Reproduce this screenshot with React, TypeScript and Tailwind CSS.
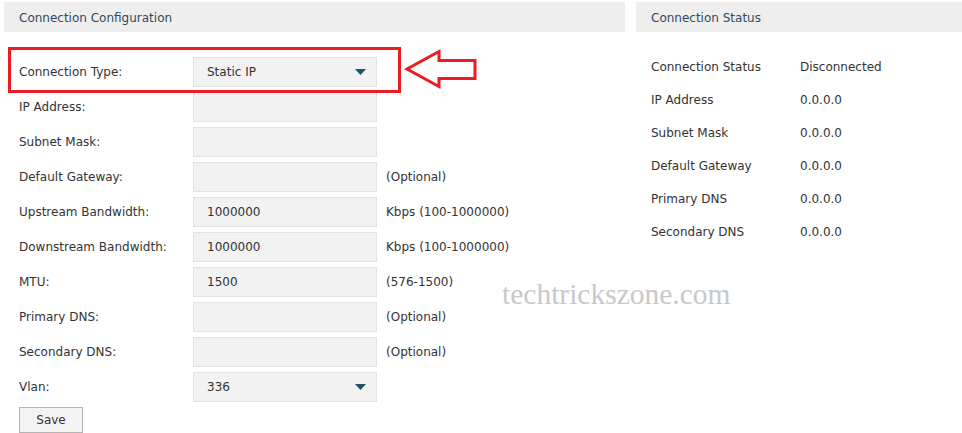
import React from "react";

type Row = { label: string; value?: string; hint?: string; select?: boolean };

const configRows: Row[] = [
  { label: "Connection Type:", value: "Static IP", select: true },
  { label: "IP Address:" },
  { label: "Subnet Mask:" },
  { label: "Default Gateway:", hint: "(Optional)" },
  { label: "Upstream Bandwidth:", value: "1000000", hint: "Kbps (100-1000000)" },
  { label: "Downstream Bandwidth:", value: "1000000", hint: "Kbps (100-1000000)" },
  { label: "MTU:", value: "1500", hint: "(576-1500)" },
  { label: "Primary DNS:", hint: "(Optional)" },
  { label: "Secondary DNS:", hint: "(Optional)" },
  { label: "Vlan:", value: "336", select: true },
];

const statusRows = [
  ["Connection Status", "Disconnected"],
  ["IP Address", "0.0.0.0"],
  ["Subnet Mask", "0.0.0.0"],
  ["Default Gateway", "0.0.0.0"],
  ["Primary DNS", "0.0.0.0"],
  ["Secondary DNS", "0.0.0.0"],
];

function Caret() {
  return (
    <svg width="11" height="6" viewBox="0 0 11 6" className="ml-auto">
      <path d="M0 0h11L5.5 6z" fill="#1f5563" />
    </svg>
  );
}

function Field({ row }: { row: Row }) {
  return (
    <div className="flex h-[35px] items-center">
      <div className="w-[174px] shrink-0">{row.label}</div>
      <div className="flex h-[30px] w-[184px] shrink-0 items-center border border-[#e3e3e3] bg-[#f2f2f2] pl-[13px] pr-[10px]">
        <span>{row.value}</span>
        {row.select && <Caret />}
      </div>
      {row.hint && <div className="ml-[9px]">{row.hint}</div>}
    </div>
  );
}

export default function App() {
  return (
    <div
      className="relative h-[433px] w-[962px] overflow-hidden bg-white text-[12px] text-[#333]"
      style={{ fontFamily: '"DejaVu Sans", Verdana, sans-serif' }}
    >
      <div className="flex gap-[11px] pl-[4px] pt-[2px]">
        {/* configuration form */}
        <div className="w-[621px]">
          <div className="flex h-[30px] items-center bg-[#eeeeee] pl-[15px] pt-[1px] text-[#34495e]">
            Connection Configuration
          </div>
          <div className="pl-[15px] pt-[22px]">
            {configRows.map((r) => (
              <Field key={r.label} row={r} />
            ))}
            <button className="mt-[3px] h-[26px] w-[64px] border border-[#b5b5b5] bg-[#f3f3f3] text-[#333]">
              Save
            </button>
          </div>
        </div>

        {/* status panel */}
        <div className="flex-1">
          <div className="flex h-[30px] items-center bg-[#eeeeee] pl-[15px] pt-[1px] text-[#34495e]">
            Connection Status
          </div>
          <div className="pl-[15px] pt-[18px]">
            {statusRows.map(([k, v]) => (
              <div key={k} className="flex h-[33px] items-center">
                <div className="w-[149px]">{k}</div>
                <div>{v}</div>
              </div>
            ))}
          </div>
        </div>
      </div>

      {/* highlight box and arrow */}
      <div className="absolute left-[8px] top-[47px] h-[46px] w-[393px] border-[3px] border-[#ed1c24]" />
      <svg className="absolute left-[400px] top-[45px]" width="85" height="48" viewBox="0 0 85 48">
        <path
          d="M7 24 L39 6.5 L39 15.5 L75 15.5 L75 33.5 L39 33.5 L39 41.5 Z"
          fill="none"
          stroke="#ed1c24"
          strokeWidth="3"
          strokeLinejoin="miter"
        />
      </svg>

      <div
        className="absolute left-[502px] top-[277px] text-[29.5px] leading-[34px] text-[#c8c8cc]"
        style={{ fontFamily: '"Liberation Serif", "Times New Roman", serif' }}
      >
        techtrickszone.com
      </div>
    </div>
  );
}
